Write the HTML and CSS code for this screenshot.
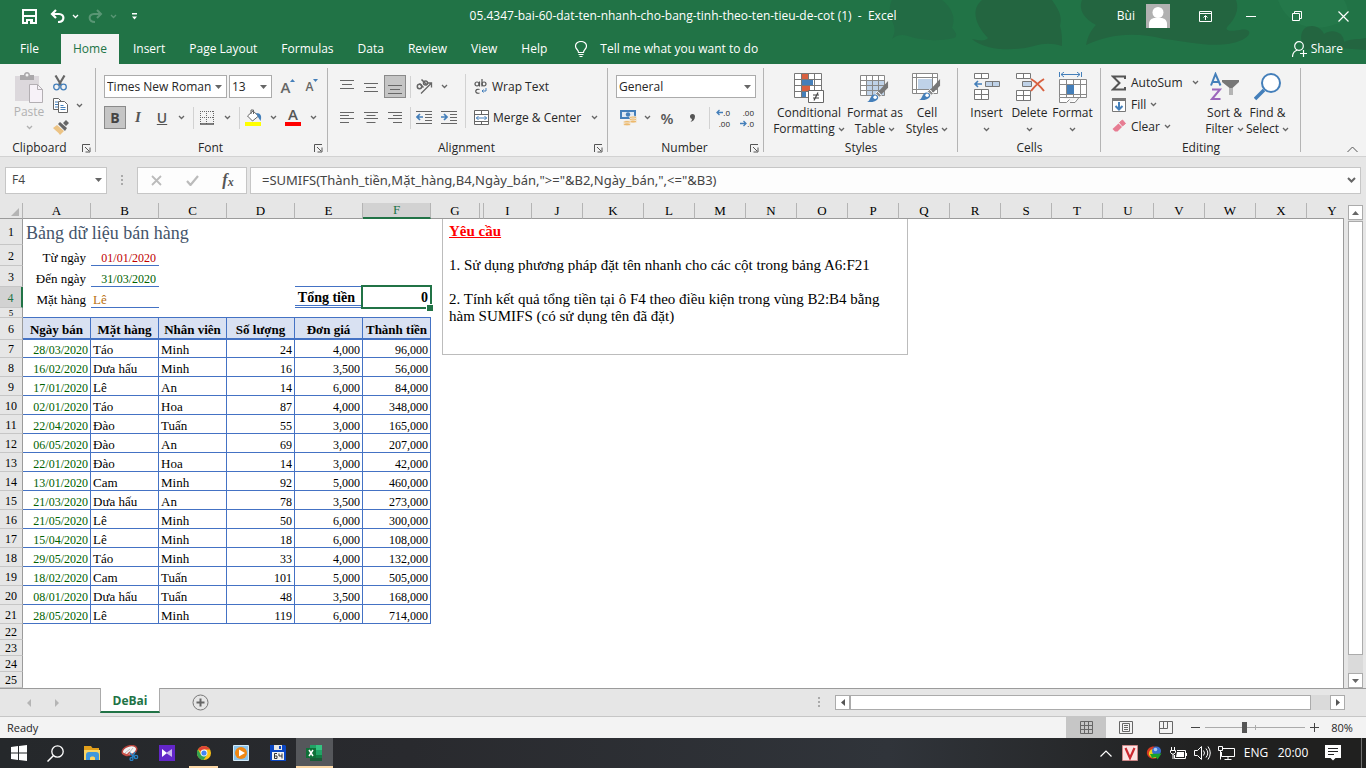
FILE: index.html
```html
<!DOCTYPE html>
<html lang="vi">
<head>
    <meta charset="UTF-8">
    <meta name="viewport" content="width=device-width, initial-scale=1.0">
    <title>05.4347-bai-60-dat-ten-nhanh-cho-bang-tinh-theo-ten-tieu-de-cot (1) - Excel</title>
    <link rel="stylesheet" href="styles.css">
</head>
<body>
    <!-- shared icons -->
    <svg class="defs" width="0" height="0" aria-hidden="true">
        <symbol id="chev" viewBox="0 0 7 5"><path d="M1 1l2.5 2.5L6 1" fill="none" stroke="currentColor" stroke-width="1.3"/></symbol>
        <symbol id="tri" viewBox="0 0 7 4"><path d="M0 0h7L3.5 4z" fill="currentColor"/></symbol>
        <symbol id="launch" viewBox="0 0 9 9"><path d="M.5 8V.5H8M3 3l4 4M8 3.5V8H3.5" fill="none" stroke="#555"/></symbol>
        <symbol id="brush" viewBox="0 0 24 24"><path d="M23 1v7l-7 7-3-3z" fill="#777"/><path d="M12 12l4 4-2 2-4-4z" fill="#8a8a8a" stroke="#f3f3f3"/><path d="M1 23c4-1 3-8 8-8 4 0 5 4 2 6-2 2-6 2-10 2z" fill="#447fba"/><circle cx="9.5" cy="18" r="1.8" fill="#fff"/></symbol>
    </svg>

    <header class="header">
        <svg class="header-art" width="500" height="64" viewBox="0 0 500 64" aria-hidden="true">
            <path d="M26 0h50c10 8 14 18 10 28 4 4 6 8 2 10-18 4-34 2-46-2-6-2-12-1-16 3 4-8 3-12 0-18-3-8-3-15 0-21z" fill="#226b44"/>
            <path d="M116 0h70c8 12 10 16 8 26 2 6 2 12 2 20-10-3-18-3-28 0-22 6-50 4-62-7 8 2 14 2 16-1-12-12-18-28-6-38z" fill="#236540"/>
            <path d="M216 0h154c4 10-2 20-8 26-4 4 0 6 12 4 10-2 14 4 2 10-22 10-50 2-78-1-32-8-56-4-78 6 2-10 6-16 10-20-12-6-18-16-14-25z" fill="#236540"/>
            <path d="M412 0h66c8 12 2 24-8 24-20 8-48 4-58-24z" fill="#24784a"/>
            <path d="M440 50c-8-10-6-24 6-24 6 0 10 4 12 8 8-6 20-2 20 8 8-4 14-2 22-4v12c-24-2-44-4-60 0z" fill="#236540"/>
        </svg>
        <div class="title-bar">
            <div class="quick-access">
                <button class="qa-save" title="Save"><svg width="15" height="15" viewBox="0 0 15 15"><path d="M1 1h13v13H1z" fill="none" stroke="#fff" stroke-width="2"/><path d="M2 6h11v2H2zM4 10h7v5H4z" fill="#fff"/><path d="M6 12h2v3H6z" fill="#217346"/></svg></button>
                <button class="qa-btn" title="Undo"><svg width="15" height="14" viewBox="0 0 15 14"><path d="M6 1L2 5l4 4M2 5h7c6 0 6 8-1 8" fill="none" stroke="#fff" stroke-width="2.2"/></svg></button>
                <button class="qa-chev" title="Undo list"><svg width="7" height="5"><use href="#chev"/></svg></button>
                <button class="qa-btn dim" title="Redo"><svg width="15" height="14" viewBox="0 0 15 14"><path d="M9 1l4 4-4 4M13 5H6c-6 0-6 8 1 8" fill="none" stroke="#fff" stroke-width="2"/></svg></button>
                <button class="qa-chev dim" title="Redo list"><svg width="7" height="5"><use href="#chev"/></svg></button>
                <button class="qa-more" title="Customize"><svg width="5" height="7" viewBox="0 0 5 7"><path d="M0 0h5v1.5H0zM0 3.5h5L2.5 6.5z" fill="#fff"/></svg></button>
            </div>
            <div class="doc-title">05.4347-bai-60-dat-ten-nhanh-cho-bang-tinh-theo-ten-tieu-de-cot (1) &nbsp;-&nbsp; Excel</div>
            <div class="window-area">
                <span class="user-name">Bùi</span>
                <svg class="avatar" width="24" height="24" viewBox="0 0 24 24"><path d="M0 0h24v24H0z" fill="#b1b1b1"/><circle cx="12" cy="8.5" r="5.5" fill="#fff"/><path d="M3 24v-4c0-4 3-6 6-6h6c3 0 6 2 6 6v4z" fill="#fff"/></svg>
                <button class="win-btn" title="Ribbon Display Options"><svg width="13" height="11" viewBox="0 0 13 11"><path d="M.5.5h12v10H.5zM.5 2.5h12M6.5 9V5M4.5 6.5l2-2 2 2" fill="none" stroke="#fff"/></svg></button>
                <button class="win-btn" title="Minimize"><svg width="10" height="10" viewBox="0 0 10 10"><path d="M0 5.5h10" stroke="#fff"/></svg></button>
                <button class="win-btn" title="Restore"><svg width="10" height="10" viewBox="0 0 10 10"><path d="M.5 2.5h7v7h-7zM2.5 2.5v-2h7v7h-2" fill="none" stroke="#fff"/></svg></button>
                <button class="win-btn" title="Close"><svg width="11" height="11" viewBox="0 0 11 11"><path d="M.5.5l10 10M10.5.5l-10 10" stroke="#fff" stroke-width="1.2"/></svg></button>
            </div>
        </div>
        <nav class="tabs">
            <a class="tab tab-file" href="#">File</a>
            <a class="tab active" href="#">Home</a>
            <a class="tab" href="#">Insert</a>
            <a class="tab" href="#">Page Layout</a>
            <a class="tab" href="#">Formulas</a>
            <a class="tab" href="#">Data</a>
            <a class="tab" href="#">Review</a>
            <a class="tab" href="#">View</a>
            <a class="tab" href="#">Help</a>
            <button class="tell-me"><svg width="12" height="16" viewBox="0 0 12 16"><path d="M3.5 11.5c0-3-3-3-3-6.5a5.5 4.5 0 0 1 11 0c0 3.5-3 3.5-3 6.500zM3.5 13.5h5M4.5 15.500h3" fill="none" stroke="#fff" stroke-width="1.2"/></svg>Tell me what you want to do</button>
            <button class="share"><svg width="15" height="16" viewBox="0 0 15 16"><circle cx="7" cy="5" r="4.3" fill="none" stroke="#fff" stroke-width="1.2"/><path d="M.5 16c0-4 2-6 5-7M11.5 9v7M8 12.5h7" fill="none" stroke="#fff" stroke-width="1.2"/></svg>Share</button>
        </nav>
    </header>

    <div class="ribbon">
        <section class="group g-clipboard">
            <div class="group-body">
                <button class="paste" disabled>
                    <svg width="30" height="32" viewBox="0 0 30 32"><path d="M1 4h24v25H1z" fill="#dcd8dc"/><path d="M6 3h4c0-4 6-4 6 0h4v5H6z" fill="#aaa8aa"/><circle cx="13" cy="3" r="1.5" fill="#f3f3f3"/><path d="M15.5 12.5h8l5 5v13h-13z" fill="#f7f2f8" stroke="#b3afb3"/><path d="M23.5 12.5v5h5" fill="none" stroke="#b3afb3"/></svg>
                    Paste
                    <svg class="chev" width="7" height="5"><use href="#chev"/></svg>
                </button>
                <div class="clip-tools">
                    <button title="Cut"><svg width="14" height="16" viewBox="0 0 14 16"><path d="M2.5.5l6 10M11.5.5l-6 10" stroke="#666" stroke-width="2.2"/><circle cx="3.5" cy="12" r="2.8" fill="#f3f3f3" stroke="#447fba" stroke-width="1.3"/><circle cx="10.5" cy="12" r="2.8" fill="#f3f3f3" stroke="#447fba" stroke-width="1.3"/></svg></button>
                    <button title="Copy"><svg width="15" height="15" viewBox="0 0 15 15"><path d="M.5.5h5l3 3v8h-8z" fill="#fff" stroke="#666"/><path d="M2 4h3M2 6.5h3M2 9h3" stroke="#447fba"/><path d="M5.5 3.5h6l3 3v8h-9z" fill="#fff" stroke="#666"/><path d="M7.5 7.5h3M7.5 9.5h5M7.5 11.5h5" stroke="#447fba"/></svg><svg class="chev" width="7" height="5"><use href="#chev"/></svg></button>
                    <button title="Format Painter"><svg width="16" height="15" viewBox="0 0 16 15"><path d="M10 3l3-3 3 3-3 3zM5 4l2-2 7 6-2 3z" fill="#666"/><path d="M4 5l7 6-4 4C5 12 3 11 0 8z" fill="#ecc384"/></svg></button>
                </div>
            </div>
            <footer class="group-label"><span>Clipboard</span><button class="launcher" title="Clipboard settings"><svg width="9" height="9"><use href="#launch"/></svg></button></footer>
        </section>

        <section class="group g-font">
            <div class="group-body rows">
                <div class="tool-row">
                    <label class="combo font-name"><select aria-label="Font"><option>Times New Roman</option></select><svg width="7" height="4"><use href="#tri"/></svg></label>
                    <label class="combo font-size"><select aria-label="Font size"><option>13</option></select><svg width="7" height="4"><use href="#tri"/></svg></label>
                    <button class="tool size-step" title="Increase font size"><span class="grow-a">A</span><svg width="5" height="3" viewBox="0 0 5 3"><path d="M0 3h5L2.5 0z" fill="#447fba"/></svg></button>
                    <button class="tool size-step" title="Decrease font size"><span class="shrink-a">A</span><svg width="5" height="3" viewBox="0 0 5 3"><path d="M0 0h5L2.5 3z" fill="#447fba"/></svg></button>
                </div>
                <div class="tool-row">
                    <button class="tool on bold">B</button>
                    <button class="tool italic">I</button>
                    <button class="tool underline">U</button>
                    <button class="drop" title="Underline style"><svg width="7" height="5"><use href="#chev"/></svg></button>
                    <i class="sep"></i>
                    <button class="tool wide" title="Borders"><svg width="14" height="14" viewBox="0 0 14 14"><path d="M.5 0v13M6.5 0v13M13.5 0v13M0 .5h14M0 6.5h14" stroke="#666" stroke-dasharray="1 1"/><path d="M0 13h14" stroke="#555" stroke-width="1.5"/></svg></button>
                    <button class="drop" title="Border style"><svg width="7" height="5"><use href="#chev"/></svg></button>
                    <i class="sep"></i>
                    <button class="tool wide" title="Fill color"><svg width="17" height="17" viewBox="0 0 17 17"><path d="M8 2L2.5 7l5 5 6-5z" fill="#fff" stroke="#666"/><path d="M6 5V1h2.5v4" fill="none" stroke="#666"/><path d="M11 4c5 0 6 3 4.5 8L13 8z" fill="#447fba"/><path d="M0 13h16v4H0z" fill="#ff0"/></svg></button>
                    <button class="drop" title="Fill palette"><svg width="7" height="5"><use href="#chev"/></svg></button>
                    <button class="tool wide font-color" title="Font color">A</button>
                    <button class="drop" title="Font palette"><svg width="7" height="5"><use href="#chev"/></svg></button>
                </div>
            </div>
            <footer class="group-label"><span>Font</span><button class="launcher" title="Font settings"><svg width="9" height="9"><use href="#launch"/></svg></button></footer>
        </section>

        <section class="group g-align">
            <div class="group-body">
                <div class="rows align-tools">
                    <div class="tool-row">
                        <button class="tool" title="Top align"><svg width="14" height="14" viewBox="0 0 14 14"><path d="M0 .5h14M2 4.5h10M0 8.5h14" stroke="#666"/></svg></button>
                        <button class="tool" title="Middle align"><svg width="14" height="14" viewBox="0 0 14 14"><path d="M0 3.5h14M2 7.5h10M0 11.5h14" stroke="#666"/></svg></button>
                        <button class="tool on" title="Bottom align"><svg width="14" height="14" viewBox="0 0 14 14"><path d="M0 5.5h14M2 9.5h10M0 13.5h14" stroke="#666"/></svg></button>
                        <i class="sep"></i>
                        <button class="tool wide" title="Orientation"><svg width="17" height="15" viewBox="0 0 17 15"><path d="M5 14.5L15 4.5M11 4h4.5v4.5" fill="none" stroke="#666" stroke-width="1.3"/><circle cx="3.5" cy="7.5" r="2.2" fill="none" stroke="#666" stroke-width="1.5"/><path d="M3.5 4.5l4 4M5.5.5l5.5 5.5" stroke="#666" stroke-width="1.5"/><circle cx="9.5" cy="4" r="2" fill="none" stroke="#666" stroke-width="1.5"/></svg></button>
                        <button class="drop" title="Orientation menu"><svg width="7" height="5"><use href="#chev"/></svg></button>
                    </div>
                    <div class="tool-row">
                        <button class="tool" title="Align left"><svg width="14" height="12" viewBox="0 0 14 12"><path d="M0 .5h14M0 3.5h9M0 6.5h14M0 10.5h9" stroke="#666"/></svg></button>
                        <button class="tool" title="Center"><svg width="14" height="12" viewBox="0 0 14 12"><path d="M0 .5h14M2.5 3.5h9M0 6.5h14M2.5 10.5h9" stroke="#666"/></svg></button>
                        <button class="tool" title="Align right"><svg width="14" height="12" viewBox="0 0 14 12"><path d="M0 .5h14M5 3.5h9M0 6.5h14M5 10.5h9" stroke="#666"/></svg></button>
                        <i class="sep"></i>
                        <button class="tool wide" title="Decrease indent"><svg width="16" height="13" viewBox="0 0 16 13"><path d="M0 .5h16M9 3.5h7M9 6.5h7M9 9.5h7M0 12.5h16" stroke="#666"/><path d="M1 6h6M4 3L1 6l3 3" fill="none" stroke="#447fba" stroke-width="1.7"/></svg></button>
                        <button class="tool" title="Increase indent"><svg width="16" height="13" viewBox="0 0 16 13"><path d="M0 .5h16M9 3.5h7M9 6.5h7M9 9.5h7M0 12.5h16" stroke="#666"/><path d="M0 6h6M3 3l3 3-3 3" fill="none" stroke="#447fba" stroke-width="1.7"/></svg></button>
                    </div>
                </div>
                <i class="sep tall"></i>
                <div class="rows wrap-tools">
                    <button class="text-tool"><svg width="14" height="16" viewBox="0 0 14 16"><g fill="none" stroke="#555" stroke-width="1.2"><circle cx="3" cy="5" r="2"/><path d="M5.5 2.5v5M8 0v7.5"/><circle cx="10" cy="5" r="2"/><path d="M5.5 10.5c-5-1.5-5 5 0 3.5"/></g><path d="M12 9v3H8M9.5 10.5L8 12l1.5 1.5" fill="none" stroke="#447fba"/></svg>Wrap Text</button>
                    <button class="text-tool"><svg width="15" height="16" viewBox="0 0 15 16"><path d="M.5.5h14v14H.5zM.5 4.5h14M.5 11.5h14M7.5.5v4M7.5 11.5v3" fill="#fff" stroke="#666"/><path d="M2 8h11M4.5 6l-2 2 2 2M10.5 6l2 2-2 2" fill="none" stroke="#447fba"/></svg>Merge &amp; Center<svg class="chev" width="7" height="5"><use href="#chev"/></svg></button>
                </div>
            </div>
            <footer class="group-label"><span>Alignment</span><button class="launcher" title="Alignment settings"><svg width="9" height="9"><use href="#launch"/></svg></button></footer>
        </section>

        <section class="group g-number">
            <div class="group-body rows">
                <div class="tool-row">
                    <label class="combo number-format"><select aria-label="Number format"><option>General</option></select><svg width="7" height="4"><use href="#tri"/></svg></label>
                </div>
                <div class="tool-row">
                    <button class="tool" title="Accounting format"><svg width="17" height="16" viewBox="0 0 17 16"><path d="M0 0h16v9H0z" fill="#447fba"/><path d="M2 2h12v5H2z" fill="#dfe9f4"/><circle cx="8" cy="4.5" r="2.2" fill="#447fba"/><g fill="#ecb96d" stroke="#f3f3f3" stroke-width=".7"><ellipse cx="13" cy="7.5" rx="3.5" ry="1.5"/><ellipse cx="13" cy="9.5" rx="3.5" ry="1.5"/><ellipse cx="13" cy="11.5" rx="3.5" ry="1.5"/><ellipse cx="7" cy="12" rx="3.5" ry="1.5"/><ellipse cx="7" cy="14.3" rx="3.5" ry="1.5"/></g></svg></button>
                    <button class="drop" title="Currency list"><svg width="7" height="5"><use href="#chev"/></svg></button>
                    <button class="tool wide percent">%</button>
                    <button class="tool" title="Comma style"><svg width="5" height="8" viewBox="0 0 5 8"><path d="M0 2.5A2.500 2.500 0 0 1 5 2.500C5 5.500 3 7.500.5 8 1.500 7 2 6 2 5A2.500 2.500 0 0 1 0 2.500z" fill="#555"/></svg></button>
                    <i class="sep"></i>
                    <button class="tool decimal" title="Increase decimal"><span class="pair"><svg width="7" height="7" viewBox="0 0 7 7"><path d="M1 3.5h6M3.5 1L1 3.5 3.5 6" fill="none" stroke="#447fba" stroke-width="1.3"/></svg>.0</span><span>.00</span></button>
                    <button class="tool decimal" title="Decrease decimal"><span>.00</span><span class="pair"><svg width="7" height="7" viewBox="0 0 7 7"><path d="M0 3.5h6M3.5 1L6 3.5 3.5 6" fill="none" stroke="#447fba" stroke-width="1.3"/></svg>.0</span></button>
                </div>
            </div>
            <footer class="group-label"><span>Number</span><button class="launcher" title="Number settings"><svg width="9" height="9"><use href="#launch"/></svg></button></footer>
        </section>

        <section class="group g-styles">
            <div class="group-body">
                <button class="big w-cond">
                    <svg width="30" height="30" viewBox="0 0 30 30"><path d="M.5.5h27v24H.5z" fill="#fff"/><path d="M8 1h6v6H8zM8 13h8v6H8z" fill="#d8603f"/><path d="M8 7h11v6H8zM8 19h4v5H8z" fill="#447fba"/><path d="M.5.5h27v24H.5zM7.5.5v24M14.5.5v6M20.5.5v24M.5 6.5h27M.5 12.5h27M.5 18.5h27" fill="none" stroke="#777"/><path d="M14.5 17.5h15v12h-15z" fill="#fff" stroke="#666"/><path d="M19 22h6M19 25h6M24 19.5l-4 8" stroke="#444" stroke-width="1.2"/></svg>
                    <span>Conditional</span><span>Formatting <svg class="chev" width="7" height="5"><use href="#chev"/></svg></span>
                </button>
                <button class="big w-table">
                    <svg width="30" height="30" viewBox="0 0 30 30"><path d="M.5 2.5h24v20H.5z" fill="#fff"/><path d="M7 8h18v15H7z" fill="#bfd2e8"/><path d="M.5 2.5h24v20H.5zM6.5 2.5v20M12.5 2.5v20M18.5 2.5v20M.5 7.5h24M.5 12.5h24M.5 17.5h24" fill="none" stroke="#888"/><use href="#brush" x="6" y="7" width="23" height="23"/></svg>
                    <span>Format as</span><span>Table <svg class="chev" width="7" height="5"><use href="#chev"/></svg></span>
                </button>
                <button class="big w-cell">
                    <svg width="30" height="30" viewBox="0 0 30 30"><path d="M.5.5h25v20H.5zM.5 4.5h25M.5 16.5h25M4.5.5v20M20.5.5v20" fill="#fff" stroke="#888"/><path d="M6 6h14v10H6z" fill="#bfd2e8"/><use href="#brush" x="6" y="5" width="23" height="23"/></svg>
                    <span>Cell</span><span>Styles <svg class="chev" width="7" height="5"><use href="#chev"/></svg></span>
                </button>
            </div>
            <footer class="group-label"><span>Styles</span></footer>
        </section>

        <section class="group g-cells">
            <div class="group-body">
                <button class="big w-small">
                    <svg width="28" height="30" viewBox="0 0 28 30"><path d="M1.5.5h14v5h-14zM8.5.5v5M1.5 16.5h14v10h-14zM8.5 16.5v10M1.5 21.5h14" fill="#fff" stroke="#777"/><path d="M12.5 8.5h14v5h-14zM19.5 8.5v5" fill="#bfd2e8" stroke="#777"/><path d="M2 11h7M5 8l-3 3 3 3" fill="none" stroke="#447fba" stroke-width="1.6"/></svg>
                    <span>Insert</span><span><svg class="chev" width="7" height="5"><use href="#chev"/></svg></span>
                </button>
                <button class="big w-small">
                    <svg width="30" height="30" viewBox="0 0 30 30"><path d="M1.5.5h14v5h-14zM8.5.5v5M1.5 17.5h14v10h-14zM8.5 17.5v10M1.5 22.5h14" fill="#fff" stroke="#777"/><path d="M7.5 8.5h9v5h-9z" fill="#bfd2e8" stroke="#777"/><path d="M16 6c5 3 9 7 13 12M29 6c-5 3-9 7-13 12" fill="none" stroke="#d8603f" stroke-width="2"/></svg>
                    <span>Delete</span><span><svg class="chev" width="7" height="5"><use href="#chev"/></svg></span>
                </button>
                <button class="big w-small">
                    <svg width="28" height="32" viewBox="0 0 28 32"><path d="M.5 0v5M22.5 0v5M2 2.5h19M5 0L2 2.5 5 5M18 0l3 2.5L18 5" fill="none" stroke="#447fba"/><path d="M.5 7.5h27v18H.5zM7.5 7.5v18M14.5 7.5v18M21.5 7.5v18M.5 12.5h27M.5 22.5h27M.5 25.5v5h7l3-3M11 30.5h5l4-5" fill="#fff" stroke="#888"/><path d="M8 13h7v9H8z" fill="#447fba"/></svg>
                    <span>Format</span><span><svg class="chev" width="7" height="5"><use href="#chev"/></svg></span>
                </button>
            </div>
            <footer class="group-label"><span>Cells</span></footer>
        </section>

        <section class="group g-editing">
            <div class="group-body">
                <div class="edit-tools">
                    <button class="text-tool autosum"><svg width="16" height="16" viewBox="0 0 16 16"><path d="M14 4V1.500H2L8.500 8 2 14.500h12V12" fill="none" stroke="#555" stroke-width="2"/></svg>AutoSum<svg class="chev" width="7" height="5"><use href="#chev"/></svg></button>
                    <button class="text-tool"><svg width="16" height="16" viewBox="0 0 16 16"><path d="M1.5 1.5h13v13h-13z" fill="#fff" stroke="#777"/><path d="M1 1h14v3H1z" fill="#777"/><path d="M8 5v8M4.5 9L8 12.500 11.500 9" fill="none" stroke="#447fba" stroke-width="2"/></svg>Fill <svg class="chev" width="7" height="5"><use href="#chev"/></svg></button>
                    <button class="text-tool"><svg width="16" height="16" viewBox="0 0 16 16"><path d="M8.5 3.5l3-2.500 3 3.500-3 2.500z" fill="#e77c92" stroke="#e77c92"/><path d="M7.5 4.500L11 8l-4.500 4.500H4L1.500 10z" fill="#e77c92"/></svg>Clear <svg class="chev" width="7" height="5"><use href="#chev"/></svg></button>
                </div>
                <button class="big w-small">
                    <svg width="30" height="30" viewBox="0 0 30 30"><path d="M1 12.5L5.5 1l5 11.5M3 9h5.5" fill="none" stroke="#447fba" stroke-width="2"/><path d="M2 16.5h8L2 26h8.5" fill="none" stroke="#9c67bb" stroke-width="2"/><path d="M12 7h17v2l-6.500 6v7h-3v-7L12 9z" fill="#777"/><path d="M21 15v7" stroke="#f3f3f3"/></svg>
                    <span>Sort &amp;</span><span>Filter <svg class="chev" width="7" height="5"><use href="#chev"/></svg></span>
                </button>
                <button class="big w-small">
                    <svg width="28" height="30" viewBox="0 0 28 30"><circle cx="17" cy="10" r="9" fill="#fff" stroke="#447fba" stroke-width="2"/><path d="M10 17l-9 9" stroke="#447fba" stroke-width="3.5"/></svg>
                    <span>Find &amp;</span><span>Select <svg class="chev" width="7" height="5"><use href="#chev"/></svg></span>
                </button>
            </div>
            <footer class="group-label"><span>Editing</span></footer>
        </section>

        <button class="collapse" title="Collapse the Ribbon"><svg width="11" height="7" viewBox="0 0 11 7"><path d="M.5 6l5-5 5 5" fill="none" stroke="#555"/></svg></button>
    </div>

    <div class="formula-bar">
        <label class="combo name-box"><select aria-label="Name box"><option>F4</option></select><svg width="7" height="4"><use href="#tri"/></svg></label>
        <svg class="grip" width="2" height="11" viewBox="0 0 2 11"><path d="M0 0h2v2H0zM0 4h2v2H0zM0 8h2v2H0z" fill="#aaa"/></svg>
        <div class="formula-actions">
            <button title="Cancel"><svg width="11" height="11" viewBox="0 0 11 11"><path d="M1 1l9 9M10 1l-9 9" stroke="#bbb" stroke-width="1.8"/></svg></button>
            <button title="Enter"><svg width="13" height="11" viewBox="0 0 13 11"><path d="M1 6l3.500 4L12 1" fill="none" stroke="#bbb" stroke-width="2.2"/></svg></button>
            <button class="fx" title="Insert Function"><i>f</i><small>x</small></button>
        </div>
        <div class="formula-field">
            <input type="text" aria-label="Formula" value='=SUMIFS(Thành_tiền,Mặt_hàng,B4,Ngày_bán,"&gt;="&amp;B2,Ngày_bán,",&lt;="&amp;B3)'>
            <button title="Expand formula bar"><svg width="9" height="6" viewBox="0 0 9 6"><path d="M1 1l3.500 3.500L8 1" fill="none" stroke="#666" stroke-width="2"/></svg></button>
        </div>
    </div>

    <main class="workspace">
        <div class="sheet">
            <table>
                <colgroup>
                    <col class="c-num"><col class="c-data" span="6"><col class="c-g"><col class="c-h"><col class="c-i"><col class="c-std"><col class="c-k"><col class="c-std" span="14">
                </colgroup>
                <thead>
                    <tr>
                        <th class="corner"><svg width="8" height="8" viewBox="0 0 8 8"><path d="M8 0v8H0z" fill="#b4b4b4"/></svg></th>
                        <th>A</th><th>B</th><th>C</th><th>D</th><th>E</th><th class="current">F</th><th>G</th><th></th><th>I</th><th>J</th><th>K</th><th>L</th><th>M</th><th>N</th><th>O</th><th>P</th><th>Q</th><th>R</th><th>S</th><th>T</th><th>U</th><th>V</th><th>W</th><th>X</th><th>Y</th>
                    </tr>
                </thead>
                <tbody>
                    <tr class="r-title"><th>1</th><td class="sheet-title" colspan="6">Bảng dữ liệu bán hàng</td><td colspan="19"></td></tr>
                    <tr class="r-cond"><th>2</th><td class="cond-label">Từ ngày</td><td class="cond red">01/01/2020</td><td colspan="23"></td></tr>
                    <tr class="r-cond"><th>3</th><td class="cond-label">Đến ngày</td><td class="cond green">31/03/2020</td><td colspan="2"></td><td class="under"></td><td class="under"></td><td colspan="19"></td></tr>
                    <tr class="r-cond"><th class="current">4</th><td class="cond-label">Mặt hàng</td><td class="cond orange">Lê</td><td colspan="2"></td><td class="total-label">Tổng tiền</td><td class="total selected">0</td><td colspan="19"></td></tr>
                    <tr class="r-gap"><th>5</th><td class="under" colspan="6"></td><td colspan="19"></td></tr>
                    <tr class="r-head"><th>6</th><td>Ngày bán</td><td>Mặt hàng</td><td>Nhân viên</td><td>Số lượng</td><td>Đơn giá</td><td>Thành tiền</td><td class="blank" colspan="19"></td></tr>
                    <tr class="r-data first"><th>7</th><td>28/03/2020</td><td>Táo</td><td>Minh</td><td>24</td><td>4,000</td><td>96,000</td><td colspan="19"></td></tr>
                    <tr class="r-data"><th>8</th><td>16/02/2020</td><td>Dưa hấu</td><td>Minh</td><td>16</td><td>3,500</td><td>56,000</td><td colspan="19"></td></tr>
                    <tr class="r-data"><th>9</th><td>17/01/2020</td><td>Lê</td><td>An</td><td>14</td><td>6,000</td><td>84,000</td><td colspan="19"></td></tr>
                    <tr class="r-data"><th>10</th><td>02/01/2020</td><td>Táo</td><td>Hoa</td><td>87</td><td>4,000</td><td>348,000</td><td colspan="19"></td></tr>
                    <tr class="r-data"><th>11</th><td>22/04/2020</td><td>Đào</td><td>Tuấn</td><td>55</td><td>3,000</td><td>165,000</td><td colspan="19"></td></tr>
                    <tr class="r-data"><th>12</th><td>06/05/2020</td><td>Đào</td><td>An</td><td>69</td><td>3,000</td><td>207,000</td><td colspan="19"></td></tr>
                    <tr class="r-data"><th>13</th><td>22/01/2020</td><td>Đào</td><td>Hoa</td><td>14</td><td>3,000</td><td>42,000</td><td colspan="19"></td></tr>
                    <tr class="r-data"><th>14</th><td>13/01/2020</td><td>Cam</td><td>Minh</td><td>92</td><td>5,000</td><td>460,000</td><td colspan="19"></td></tr>
                    <tr class="r-data"><th>15</th><td>21/03/2020</td><td>Dưa hấu</td><td>An</td><td>78</td><td>3,500</td><td>273,000</td><td colspan="19"></td></tr>
                    <tr class="r-data"><th>16</th><td>21/05/2020</td><td>Lê</td><td>Minh</td><td>50</td><td>6,000</td><td>300,000</td><td colspan="19"></td></tr>
                    <tr class="r-data"><th>17</th><td>15/04/2020</td><td>Lê</td><td>Minh</td><td>18</td><td>6,000</td><td>108,000</td><td colspan="19"></td></tr>
                    <tr class="r-data"><th>18</th><td>29/05/2020</td><td>Táo</td><td>Minh</td><td>33</td><td>4,000</td><td>132,000</td><td colspan="19"></td></tr>
                    <tr class="r-data"><th>19</th><td>18/02/2020</td><td>Cam</td><td>Tuấn</td><td>101</td><td>5,000</td><td>505,000</td><td colspan="19"></td></tr>
                    <tr class="r-data"><th>20</th><td>08/01/2020</td><td>Dưa hấu</td><td>Tuấn</td><td>48</td><td>3,500</td><td>168,000</td><td colspan="19"></td></tr>
                    <tr class="r-data"><th>21</th><td>28/05/2020</td><td>Lê</td><td>Minh</td><td>119</td><td>6,000</td><td>714,000</td><td colspan="19"></td></tr>
                    <tr class="r-empty"><th>22</th><td colspan="25"></td></tr>
                    <tr class="r-empty"><th>23</th><td colspan="25"></td></tr>
                    <tr class="r-empty"><th>24</th><td colspan="25"></td></tr>
                    <tr class="r-empty"><th>25</th><td colspan="25"></td></tr>
                </tbody>
            </table>
            <!-- text box floating over the cells -->
            <div class="note">
                <h2>Yêu cầu</h2>
                <p>1. Sử dụng phương pháp đặt tên nhanh cho các cột trong bảng A6:F21</p>
                <p>2. Tính kết quả tổng tiền tại ô F4 theo điều kiện trong vùng B2:B4 bằng hàm SUMIFS (có sử dụng tên đã đặt)</p>
            </div>
        </div>
        <div class="vscroll">
            <button title="Scroll up"><svg width="7" height="4" viewBox="0 0 7 4"><path d="M0 4h7L3.5 0z" fill="#666"/></svg></button>
            <div class="track"><div class="thumb"></div></div>
            <button title="Scroll down"><svg width="7" height="4"><use href="#tri"/></svg></button>
        </div>
    </main>

    <div class="sheet-bar">
        <button class="nav-arrow" title="Previous sheet"><svg width="4" height="8" viewBox="0 0 4 8"><path d="M4 0v8L0 4z" fill="#b5b5b5"/></svg></button>
        <button class="nav-arrow" title="Next sheet"><svg width="4" height="8" viewBox="0 0 4 8"><path d="M0 0v8l4-4z" fill="#b5b5b5"/></svg></button>
        <a class="sheet-tab" href="#">DeBai</a>
        <button class="add-sheet" title="New sheet"><svg width="17" height="17" viewBox="0 0 17 17"><circle cx="8.5" cy="8.5" r="7.5" fill="none" stroke="#777"/><path d="M4.5 8.5h8M8.5 4.5v8" stroke="#666" stroke-width="2"/></svg></button>
        <div class="hscroll-area">
            <svg class="grip" width="2" height="11" viewBox="0 0 2 11"><path d="M0 0h2v2H0zM0 4h2v2H0zM0 8h2v2H0z" fill="#aaa"/></svg>
            <div class="hscroll">
                <button title="Scroll left"><svg width="4" height="7" viewBox="0 0 4 7"><path d="M4 0v7L0 3.500z" fill="#555"/></svg></button>
                <div class="track"><div class="thumb"></div></div>
                <button title="Scroll right"><svg width="4" height="7" viewBox="0 0 4 7"><path d="M0 0v7l4-3.500z" fill="#555"/></svg></button>
            </div>
        </div>
    </div>

    <div class="status-bar">
        <span>Ready</span>
        <div class="view-tools">
            <button class="view on" title="Normal"><svg width="13" height="13" viewBox="0 0 13 13"><path d="M.5.5h12v12H.5zM4.5.5v12M8.5.5v12M.5 4.5h12M.5 8.5h12" fill="none" stroke="#666"/></svg></button>
            <button class="view" title="Page Layout"><svg width="14" height="13" viewBox="0 0 14 13"><path d="M.5.5h13v12H.5zM3.5 2.5h7v8h-7zM5 4.5h4M5 6.5h4M5 8.5h4" fill="none" stroke="#666"/></svg></button>
            <button class="view" title="Page Break Preview"><svg width="14" height="13" viewBox="0 0 14 13"><path d="M.5.5h13v12H.5zM4.5.5v7M8.5.5v7M.5 7.5h8" fill="none" stroke="#666"/></svg></button>
            <button class="zoom-btn" title="Zoom out"><svg width="9" height="9" viewBox="0 0 9 9"><path d="M0 4.5h9" stroke="#444"/></svg></button>
            <input class="zoom-range" type="range" aria-label="Zoom" min="0" max="100" value="39">
            <button class="zoom-btn" title="Zoom in"><svg width="9" height="9" viewBox="0 0 9 9"><path d="M0 4.5h9M4.5 0v9" stroke="#444"/></svg></button>
            <button class="zoom-value">80%</button>
        </div>
    </div>

    <div class="taskbar">
        <button class="task" title="Start"><svg width="16" height="16" viewBox="0 0 16 16"><path d="M0 2l7-1v6.500H0zM8 1l8-1v7.500H8zM0 8.500h7V15l-7-1zM8 8.500h8V16l-8-1z" fill="#fff"/></svg></button>
        <button class="task" title="Search"><svg width="17" height="17" viewBox="0 0 17 17"><circle cx="10.5" cy="6.5" r="5.7" fill="none" stroke="#fff" stroke-width="1.3"/><path d="M6.5 10.5l-6 6" stroke="#fff" stroke-width="1.5"/></svg></button>
        <button class="task" title="File Explorer"><svg width="17" height="15" viewBox="0 0 17 15"><path d="M0 0h7l1.500 2H15v3H0z" fill="#e3a01b"/><path d="M0 4h16v10H0z" fill="#fcd462"/><path d="M2 14V9c0-2 1-3 3-3h7c2 0 3 1 3 3v5h-4v-2c0-2-5-2-5 0v2z" fill="#3f97dd"/></svg></button>
        <button class="task" title="Snipping Tool"><svg width="18" height="16" viewBox="0 0 18 16"><ellipse cx="8.5" cy="5.5" rx="7.5" ry="4.5" fill="#f3f3f3" stroke="#b6443d" stroke-width="1.5" transform="rotate(-18 8.5 5.5)"/><path d="M4 8l5-4M8 8l4-5" stroke="#bbb"/><path d="M1 8l5 2 3-3" fill="none" stroke="#c9534a" stroke-width="1.5"/><path d="M9 8l5 5M14 7l-3 6" stroke="#2881c5" stroke-width="1.5"/><circle cx="15" cy="12" r="1.7" fill="none" stroke="#2881c5" stroke-width="1.3"/><circle cx="10.5" cy="14" r="1.5" fill="none" stroke="#2881c5" stroke-width="1.3"/></svg></button>
        <button class="task" title="Media editor"><svg width="16" height="16" viewBox="0 0 16 16"><path d="M0 0h16v16H0z" fill="#6326c9"/><path d="M3 4l5 4-5 4z" fill="#fff"/><path d="M13 4L7 8l6 4z" fill="#c9b6ec"/></svg></button>
        <button class="task running" title="Chrome"><svg width="14" height="14" viewBox="0 0 14 14"><circle cx="7" cy="7" r="7" fill="#fbc116"/><path d="M7 7L1 3.500A7 7 0 0 1 13 3.500H7z" fill="#de4436"/><path d="M.9 3.500A7 7 0 0 0 6.500 14L10 8.700 4 8.700z" fill="#32a350"/><circle cx="7" cy="7" r="3.4" fill="#fff"/><circle cx="7" cy="7" r="2.6" fill="#4285f4"/></svg></button>
        <button class="task" title="Media Player"><svg width="16" height="16" viewBox="0 0 16 16"><path d="M.5.5h15v15H.5z" fill="#8bc4ec" stroke="#d4ebf9"/><circle cx="8" cy="8" r="6" fill="#f08713"/><path d="M6 4.500l6 3.500-6 3.500z" fill="#fff"/></svg></button>
        <button class="task" title="TotalCmd 64"><svg width="16" height="16" viewBox="0 0 16 16"><path d="M0 0h15l1 1v15H1l-1-1z" fill="#0a46c3"/><path d="M4 0h8v5H4z" fill="#e6e6e6"/><path d="M9 1h2v3H9z" fill="#0a46c3"/><path d="M2 7h12v8H2z" fill="#f4f4f4"/><path d="M7 8.500H4.500v5H7v-2.500H4.500M9 8.500V11h3M12 8.500v5" fill="none" stroke="#333"/></svg></button>
        <button class="task running focused" title="Excel"><svg width="17" height="16" viewBox="0 0 17 16"><path d="M4 0h12v16H4z" fill="#21a366"/><path d="M10 0h6v5h-6z" fill="#33c481"/><path d="M4 5h6v6H4z" fill="#107c41"/><path d="M4 10h12v6H4z" fill="#185c37"/><path d="M10 10h6v3h-6z" fill="#107c41"/><path d="M0 3h10v10H0z" fill="#0f7038"/><path d="M3 5l4 6M7 5l-4 6" stroke="#fff" stroke-width="1.5"/></svg></button>
        <div class="tray">
            <button class="tray-icon" title="Show hidden icons"><svg width="12" height="7" viewBox="0 0 12 7"><path d="M.5 6.5L6 1l5.5 5.5" fill="none" stroke="#fff" stroke-width="1.2"/></svg></button>
            <button class="tray-icon" title="Vietnamese input"><svg width="16" height="16" viewBox="0 0 16 16"><path d="M.5.5h15v15H.5z" fill="#fbe3e3" stroke="#cc8787"/><path d="M3.5 3l4.500 10L12.500 3" fill="none" stroke="#cb2830" stroke-width="2.2"/></svg></button>
            <button class="tray-icon" title="Download Manager"><svg width="16" height="14" viewBox="0 0 16 14"><path d="M11 1C5-1 0 3 1 8c1 4 6 6 10 4L9 9c-5 0-4-5 2-6z" fill="#d73a22"/><path d="M10 3C6 2 2 5 3 9c2 3 5 4 8 2z" fill="#f3d21c"/><circle cx="10.5" cy="5" r="4.5" fill="#3a6fd0"/><circle cx="9.5" cy="3.5" r="1.8" fill="#a9c8f5"/><path d="M4 8l11.500-.5-4 6-1.500-2.500-4 1z" fill="#1ba32b"/></svg></button>
            <button class="tray-icon" title="Battery"><svg width="17" height="13" viewBox="0 0 17 13"><path d="M1.5 0v3M4.5 0v3M.5 3.5h5v2L4 7H2L.5 5.5zM3 7v5" fill="none" stroke="#fff"/><path d="M7 3.5h8.500v8h-11V8" fill="none" stroke="#fff"/><path d="M7 5h7v5H6z" fill="#fff"/><path d="M16 6h1v3h-1z" fill="#fff"/></svg></button>
            <button class="tray-icon" title="Volume"><svg width="17" height="14" viewBox="0 0 17 14"><path d="M.5 4.5h3l4-4v13l-4-4h-3zM9.500 4.500q2 2.500 0 5M12 2.500q3.500 4.500 0 9M14 .5q4.500 6.500 0 13" fill="none" stroke="#fff"/></svg></button>
            <button class="tray-icon" title="Network"><svg width="17" height="14" viewBox="0 0 17 14"><path d="M5 2.5h11.500v8h-13V6M10 10.5v3M6.5 13.5h7M.5.5h4v4h-4zM2.5 5v8.500" fill="none" stroke="#fff"/></svg></button>
            <span class="lang">ENG</span>
            <time class="clock">20:00</time>
            <button class="notify" title="Notifications"><svg width="16" height="16" viewBox="0 0 16 16"><path d="M0 0h16v13h-5.500L8 15.500 5.500 13H0z" fill="#fff"/><path d="M3 3.500h10M3 6.500h10M3 9.500h6" stroke="#222"/></svg></button>
            <i class="desktop-edge"></i>
        </div>
    </div>
</body>
</html>
```
FILE: styles.css
```css
* {
    margin: 0;
    padding: 0;
    box-sizing: border-box;
}

body {
    height: 100vh;
    display: flex;
    flex-direction: column;
    overflow: hidden;
    font-family: "Open Sans", "Noto Sans", sans-serif;
    font-size: 12px;
    line-height: 16px;
    color: #262626;
    background: #e6e6e6;
}

button, input, select {
    font: inherit;
    color: inherit;
    background: none;
    border: none;
    border-radius: 0;
    outline: none;
}

button {
    display: flex;
    align-items: center;
    justify-content: center;
    white-space: nowrap;
}

a {
    color: inherit;
    text-decoration: none;
}

svg {
    flex: none;
}

.defs {
    position: absolute;
}

.chev {
    color: #666;
}

/* header */
.header {
    position: relative;
    height: 64px;
    background: #217346;
    color: #fff;
}

.header-art {
    position: absolute;
    top: 0;
    right: 0;
}

.title-bar {
    position: relative;
    display: grid;
    grid-template-columns: 1fr auto 1fr;
    align-items: center;
    height: 34px;
    padding-bottom: 2px;
}

.quick-access {
    display: flex;
    align-items: center;
    padding-left: 18px;
}

.qa-save {
    width: 22px;
    height: 24px;
}

.qa-btn {
    width: 34px;
    height: 24px;
}

.qa-chev {
    width: 6px;
    margin: 0 0 0 -2px;
}

.qa-more {
    width: 36px;
}

.dim {
    opacity: 0.25;
}

.window-area {
    display: flex;
    align-items: center;
    justify-content: flex-end;
    height: 30px;
}

.avatar {
    margin: 0 12px 0 11px;
}

.win-btn {
    width: 46px;
    height: 30px;
}

.tabs {
    position: relative;
    display: flex;
    height: 30px;
}

.tab {
    padding: 0 12px;
    line-height: 30px;
}

.tab-file {
    padding: 0 22px 0 20px;
}

.tab.active {
    background: #f3f3f3;
    color: #217346;
}

.tab.active + .tab {
    padding-left: 14px;
}

.tell-me {
    gap: 13px;
    margin-left: 16px;
}

.share {
    gap: 4px;
    margin-left: auto;
    padding-right: 23px;
}

/* ribbon */
.ribbon {
    display: flex;
    height: 93px;
    padding-top: 4px;
    background: #f3f3f3;
    border-bottom: 1px solid #d2d2d2;
}

.group {
    display: flex;
    flex-direction: column;
    flex: none;
    background: linear-gradient(#b4b4b4, #b4b4b4) 100% 0 / 1px 84px no-repeat;
}

.g-clipboard { width: 96px; }
.g-font { width: 232px; }
.g-align { width: 280px; }
.g-number { width: 156px; }
.g-styles { width: 194px; }
.g-cells { width: 143px; }
.g-editing { width: 200px; }

.group-body {
    display: flex;
    height: 72px;
    padding: 4px 0 0 7px;
}

.rows {
    display: flex;
    flex-direction: column;
    gap: 8px;
}

.group-body.rows,
.align-tools,
.wrap-tools {
    padding-top: 7px;
}

.g-align .group-body {
    padding-top: 0;
}

.group-label {
    display: flex;
    align-items: center;
    height: 16px;
}

.group-label span {
    flex: 1;
    padding-left: 14px;
    text-align: center;
}

.g-clipboard .group-label span {
    padding-left: 0;
}

.group-label span:only-child {
    padding-left: 0;
}

.launcher {
    width: 17px;
    padding-right: 2px;
}

.paste {
    flex-direction: column;
    justify-content: flex-start;
    width: 44px;
    color: #b1b1b1;
}

.paste .chev {
    color: #b1b1b1;
    margin-top: 5px;
}

.clip-tools {
    display: flex;
    flex-direction: column;
    align-items: flex-start;
    padding-left: 2px;
}

.clip-tools button {
    height: 22px;
    gap: 8px;
}

.tool-row {
    display: flex;
    height: 23px;
    align-items: center;
}

.g-font .group-body,
.g-number .group-body {
    padding-left: 8px;
}

.combo {
    position: relative;
    display: flex;
    align-items: center;
    height: 23px;
    background: #fff;
    border: 1px solid #ababab;
}

.combo select {
    appearance: none;
    width: 100%;
    height: 100%;
    padding-left: 2px;
}

.combo svg {
    position: absolute;
    right: 4px;
    color: #666;
    pointer-events: none;
}

.font-name {
    width: 123px;
    margin-right: 2px;
}

.font-size {
    width: 43px;
    margin-right: 4px;
}

.number-format {
    width: 140px;
}

.tool {
    width: 24px;
    height: 23px;
}

.tool.on {
    width: 22px;
    background: #c5c5c5;
    border: 1px solid #8a8a8a;
}

.tool.wide {
    width: 26px;
}

.drop {
    width: 14px;
    height: 22px;
    color: #666;
}

.sep {
    width: 1px;
    height: 22px;
    margin-left: 5px;
    background: #d2d2d2;
}

.sep.tall {
    height: 54px;
    margin: 6px 8px 0 0;
}

.bold {
    font-size: 14px;
    font-weight: bold;
    color: #444;
}

.italic {
    font: italic bold 15px "Liberation Serif", serif;
    color: #555;
}

.underline {
    font-size: 14px;
    font-weight: 600;
    text-decoration: underline;
    color: #555;
}

.size-step {
    align-items: flex-start;
    padding-top: 4px;
    color: #666;
    font-weight: 600;
}

.grow-a {
    font-size: 15px;
}

.shrink-a {
    font-size: 12px;
}

.tool.font-color {
    align-self: flex-start;
    width: 16px;
    height: 20px;
    margin: 0 5px;
    border-bottom: 4px solid #f00;
    font-size: 15px;
    font-weight: 600;
    color: #555;
}

.align-tools {
    width: 130px;
}

.align-tools .tool.on {
    margin: 0 1px;
}

.align-tools .sep {
    margin-left: 3px;
}

.text-tool {
    justify-content: flex-start;
    gap: 4px;
    height: 23px;
}

.text-tool .chev {
    margin-left: 6px;
}

.percent {
    font-size: 15px;
    font-weight: 600;
    color: #555;
}

.decimal {
    flex-direction: column;
    align-items: flex-end;
    padding-right: 4px;
    font-size: 8px;
    line-height: 11px;
}

.pair {
    display: flex;
    align-items: center;
}

.big {
    flex-direction: column;
    justify-content: flex-start;
}

.big > svg {
    height: 32px;
    margin-bottom: 1px;
}

.big .chev {
    vertical-align: middle;
}

.w-cond { width: 76px; }
.w-table { width: 56px; }
.w-cell { width: 48px; }
.w-small { width: 43px; }

.g-editing .group-body {
    padding-left: 10px;
}

.edit-tools {
    width: 92px;
}

.edit-tools .text-tool {
    margin-top: -1px;
}

.edit-tools .chev {
    margin-left: 0;
}

.edit-tools .autosum .chev {
    margin-left: 5px;
}

.collapse {
    margin-left: auto;
    align-self: flex-end;
    width: 28px;
    height: 14px;
}

/* formula bar */
.formula-bar {
    display: flex;
    align-items: center;
    height: 46px;
    padding: 0 5px;
}

.name-box {
    width: 102px;
    height: 27px;
    border-color: #c6c6c6;
}

.name-box select {
    padding-left: 6px;
    color: #444;
}

.formula-bar .grip {
    margin: 0 14px;
}

.formula-actions {
    display: flex;
    width: 110px;
    height: 27px;
    margin-right: 3px;
    background: #fdfdfd;
    border: 1px solid #c6c6c6;
}

.formula-actions button {
    flex: 1;
}

.fx {
    font: italic bold 16px "Liberation Serif", serif;
    color: #555;
}

.fx small {
    padding-top: 4px;
    font-size: 12px;
}

.formula-field {
    flex: 1;
    display: flex;
    height: 27px;
    background: #fdfdfd;
    border: 1px solid #c6c6c6;
}

.formula-field input {
    flex: 1;
    padding-left: 11px;
    color: #444;
    font-family: "Noto Sans", "Open Sans", sans-serif;
    font-size: 13px;
}

.formula-field button {
    width: 18px;
}

/* sheet */
.workspace {
    flex: 1;
    display: flex;
    min-height: 0;
}

.sheet {
    position: relative;
    flex: 1;
    min-width: 0;
    overflow: hidden;
    font-family: "Liberation Serif", serif;
    color: #000;
}

.sheet::before {
    content: "";
    position: absolute;
    z-index: 1;
    top: 15px;
    right: 0;
    bottom: 0;
    border-right: 1px solid #9b9b9b;
}

.sheet table {
    width: 1358px;
    table-layout: fixed;
    border-collapse: separate;
    border-spacing: 0;
    background: #fff;
}

.c-num { width: 23px; }
.c-data { width: 68px; }
.c-g { width: 49px; }
.c-h { width: 4px; }
.c-i { width: 48px; }
.c-k { width: 61px; }
.c-std { width: 51px; }

.sheet th,
.sheet td {
    line-height: 14px;
    font-size: 12px;
    font-weight: normal;
    white-space: nowrap;
    vertical-align: bottom;
}

.sheet thead th {
    height: 16px;
    font-size: 13px;
    background: #e6e6e6;
    border-right: 1px solid #b4b4b4;
    border-bottom: 1px solid #9b9b9b;
}

.sheet thead .corner {
    text-align: right;
    padding: 0 3px 2px 0;
    line-height: 8px;
}

.sheet thead .current {
    background: #d2d2d2;
    color: #217346;
    border-bottom: 2px solid #217346;
}

.sheet tbody th {
    padding-top: 1px;
    background: #e6e6e6;
    border-right: 1px solid #9b9b9b;
    border-bottom: 1px solid #c6c6c6;
    vertical-align: middle;
}

.sheet tbody .current {
    background: #d2d2d2;
    color: #217346;
    border-right: 2px solid #217346;
}

.r-title { height: 26px; }
.r-cond { height: 21px; }
.r-gap { height: 10px; }
.r-head { height: 22px; }
.r-data { height: 19px; }
.r-data.first { height: 18px; }
.r-empty { height: 16px; }

.sheet .sheet-title {
    padding: 0 0 2px 3px;
    font-size: 18px;
    line-height: 20px;
    color: #44546a;
}

.sheet .cond-label {
    padding: 0 5px 1px 0;
    font-size: 13px;
    text-align: right;
}

.sheet .cond {
    padding: 0 3px 0 2px;
    text-align: right;
    border-bottom: 1px solid #4472c4;
}

.red { color: #c00000; }
.green { color: #006100; }

.sheet .orange {
    font-size: 13px;
    color: #b8700f;
    text-align: left;
}

.under {
    border-bottom: 1px solid #4472c4;
}

.sheet .total-label {
    padding-right: 8px;
    font-size: 14px;
    font-weight: bold;
    text-align: right;
    border-bottom: 3px double #4472c4;
}

.sheet .total {
    position: relative;
    padding: 0 3px 3px 0;
    font-size: 14px;
    font-weight: bold;
    text-align: right;
}

/* selection frame and fill handle */
.selected::before {
    content: "";
    position: absolute;
    inset: -2px -1px -1px -2px;
    border: 2px solid #217346;
}

.selected::after {
    content: "";
    position: absolute;
    right: -2px;
    bottom: -3px;
    width: 6px;
    height: 6px;
    background: #217346;
    border: 1px solid #fff;
    border-width: 1px 0 0 1px;
}

.sheet .r-gap th,
.sheet .r-gap td {
    padding: 0;
    font-size: 9px;
    line-height: 8px;
}

.sheet .r-head td {
    padding-bottom: 1px;
    font-size: 13px;
    font-weight: bold;
    text-align: center;
    background: #d9e1f2;
    border-right: 1px solid #4472c4;
    border-bottom: 2px solid #4472c4;
}

.sheet .r-head .blank {
    background: none;
    border: none;
}

.r-data td {
    padding: 0 2px;
    text-align: right;
    border-right: 1px solid #4472c4;
    border-bottom: 1px solid #4472c4;
}

.r-data td:nth-child(2) {
    color: #006100;
}

.sheet .r-data td:nth-child(3),
.sheet .r-data td:nth-child(4) {
    font-size: 13px;
    text-align: left;
}

.r-data td:last-child {
    border: none;
}

.note {
    position: absolute;
    top: 16px;
    left: 442px;
    width: 466px;
    height: 136px;
    padding: 4px 6px;
    background: #fff;
    border: 1px solid #bcbcbc;
    border-top: none;
    font-size: 15px;
    line-height: 17px;
}

.note h2 {
    font-size: 15px;
    color: #f00;
    text-decoration: underline;
}

.note p {
    margin-top: 17px;
}

/* scroll bars */
.vscroll {
    display: flex;
    flex-direction: column;
    width: 22px;
    padding: 2px 3px 0 4px;
}

.vscroll button,
.hscroll button {
    width: 15px;
    height: 15px;
    background: #fff;
    border: 1px solid #ababab;
    color: #666;
}

.track {
    flex: 1;
    background: #dadada;
}

.thumb {
    background: #fff;
    border: 1px solid #ababab;
}

.vscroll .track {
    width: 15px;
    padding-top: 1px;
}

.vscroll .thumb {
    height: 96%;
}

.sheet-bar {
    display: flex;
    align-items: center;
    height: 28px;
    border-top: 1px solid #9b9b9b;
    padding-left: 15px;
}

.nav-arrow {
    width: 28px;
    height: 20px;
}

.sheet-tab {
    align-self: flex-start;
    width: 60px;
    height: 25px;
    margin: -1px 0 0 29px;
    background: #fff;
    border: 1px solid #ababab;
    border-top: none;
    border-bottom: 2px solid #217346;
    font-weight: bold;
    line-height: 26px;
    text-align: center;
    color: #217346;
}

.add-sheet {
    width: 25px;
    margin-left: 28px;
}

.hscroll-area {
    display: flex;
    align-items: center;
    flex: 0 1 41%;
    margin-left: auto;
    padding-right: 21px;
}

.hscroll-area .grip {
    margin: 0 15px 0 6px;
}

.hscroll {
    display: flex;
    flex: 1;
}

.hscroll .thumb {
    width: 96%;
    height: 15px;
}

/* status bar */
.status-bar {
    display: flex;
    align-items: center;
    justify-content: space-between;
    height: 22px;
    padding-left: 7px;
    background: #f3f3f3;
    border-top: 1px solid #c6c6c6;
    font-size: 11px;
}

.view-tools {
    display: flex;
    align-items: center;
    height: 100%;
}

.view {
    width: 40px;
    height: 100%;
}

.view.on {
    background: #c6c6c6;
}

.zoom-btn {
    width: 19px;
    height: 20px;
}

.zoom-range {
    appearance: none;
    width: 100px;
    height: 11px;
    background: linear-gradient(#ababab, #ababab) 50% 50% / 1px 5px no-repeat, linear-gradient(#ababab, #ababab) 0 50% / 100% 1px no-repeat;
}

.zoom-range::-webkit-slider-thumb {
    appearance: none;
    width: 5px;
    height: 11px;
    background: #555;
}

.zoom-value {
    width: 42px;
    padding-right: 6px;
}

/* taskbar */
.taskbar {
    display: flex;
    height: 30px;
    background: linear-gradient(90deg, #25282b, #292a2e 30%, #30343a 65%, #20201f 90%);
    color: #fff;
}

.task {
    position: relative;
    width: 37px;
    height: 30px;
}

.running::after {
    content: "";
    position: absolute;
    left: 4px;
    right: 4px;
    bottom: 0;
    height: 2px;
    background: #fbd7a5;
}

.focused {
    background: #55575b;
}

.focused::after {
    left: 0;
    right: 0;
}

.tray {
    display: flex;
    align-items: center;
    margin-left: auto;
}

.tray-icon {
    width: 24px;
    height: 30px;
}

.lang {
    width: 36px;
    text-align: center;
}

.clock {
    width: 38px;
    text-align: center;
}

.notify {
    width: 42px;
    height: 30px;
}

.desktop-edge {
    width: 5px;
    height: 30px;
    margin-left: 7px;
    border-left: 1px solid #707070;
}
```
